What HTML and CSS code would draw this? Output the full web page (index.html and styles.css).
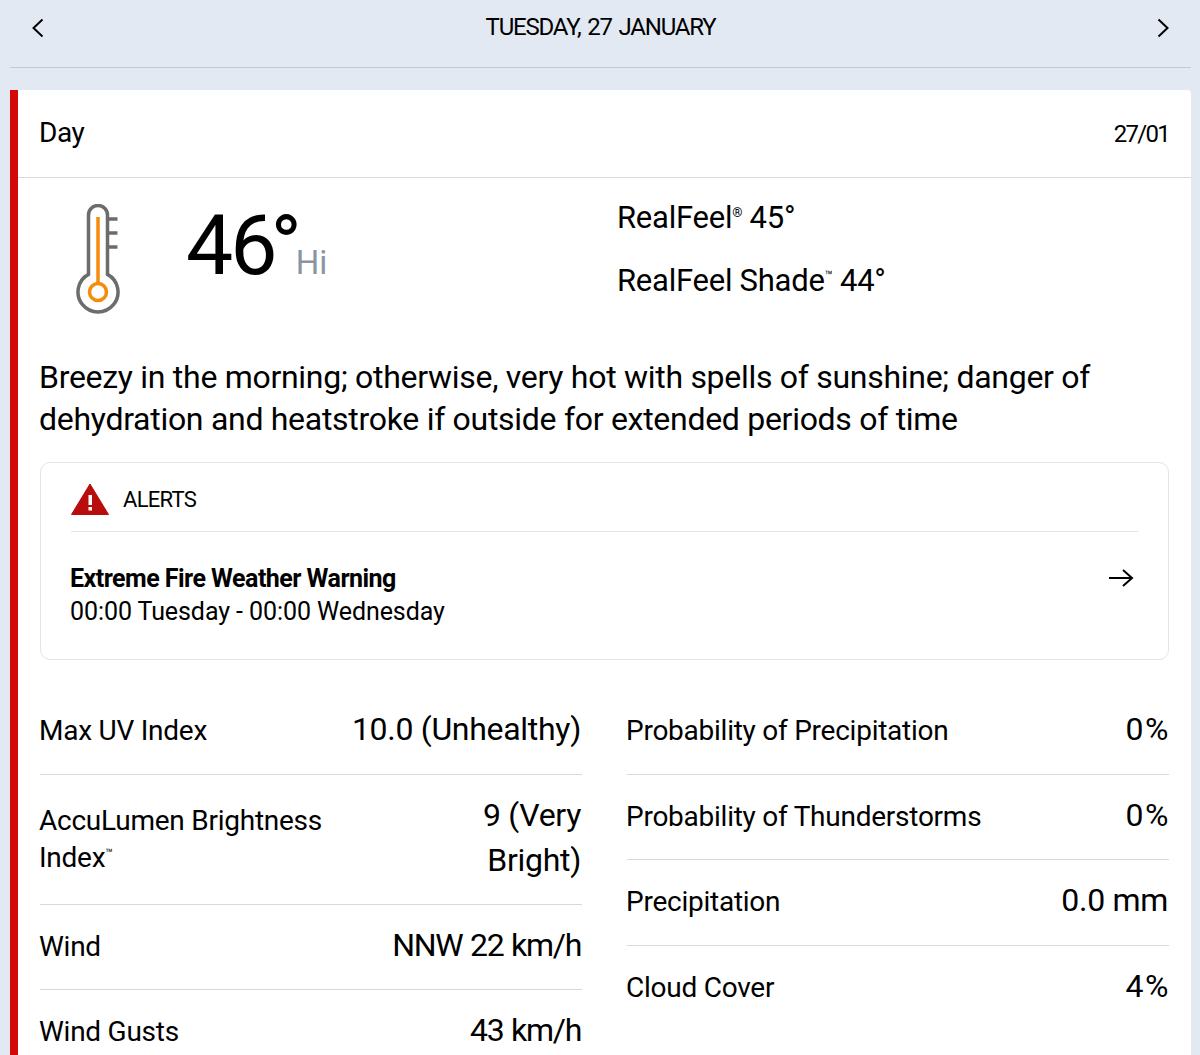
FILE: index.html
```html
<!DOCTYPE html>
<html lang="en">
<head>
    <meta charset="UTF-8">
    <title>Daily Forecast</title>
    <link rel="stylesheet" href="styles.css">
</head>
<body>
    <div class="date-nav">
        <svg class="chevron" viewBox="0 0 14 20"><path d="M12.500 1.500 3.500 10l9 8.500"/></svg>
        <span class="date-title">TUESDAY, 27 JANUARY</span>
        <svg class="chevron" viewBox="0 0 14 20"><path d="M1.500 1.500 10.500 10l-9 8.500"/></svg>
    </div>

    <div class="card">
        <div class="card-head">
            <span class="day-label">Day</span>
            <span class="day-date">27/01</span>
        </div>

        <div class="temp-row">
            <div class="temp-left">
                <svg class="thermo" viewBox="0 0 44 110">
                    <path class="thermo-glass" d="M12.500 70.400V11a9.500 9.500 0 0 1 19 0v59.400a20 20 0 1 1-19 0Z"/>
                    <path class="thermo-glass" d="M31.500 15h10M31.500 29h10M31.500 43h10"/>
                    <path class="thermo-fill" d="M22 13v66"/>
                    <circle class="thermo-fill" cx="22" cy="88" r="8.500"/>
                </svg>
                <div class="temp-value">46<span class="temp-deg">°</span><span class="temp-hi">Hi</span></div>
            </div>
            <div class="realfeel">
                <div>RealFeel<sup>®</sup> 45°</div>
                <div>RealFeel Shade<sup>™</sup> 44°</div>
            </div>
        </div>

        <p class="phrase">Breezy in the morning; otherwise, very hot with spells of sunshine; danger of dehydration and heatstroke if outside for extended periods of time</p>

        <div class="alerts">
            <div class="alerts-head">
                <svg class="alert-icon" viewBox="0 0 38 32">
                    <path d="M19 1 37.500 31.500H.5Z" fill="#b90c0c" stroke="#b90c0c" stroke-linejoin="round"/>
                    <rect x="17.500" y="12" width="3.500" height="10" fill="#fff"/>
                    <rect x="17.500" y="24" width="3.500" height="3.500" fill="#fff"/>
                </svg>
                <span class="alerts-title">ALERTS</span>
            </div>
            <div class="alert-item">
                <div class="alert-text">
                    <div class="alert-name">Extreme Fire Weather Warning</div>
                    <div class="alert-time">00:00 Tuesday - 00:00 Wednesday</div>
                </div>
                <svg class="alert-arrow" viewBox="0 0 26 20"><path d="M1 10h23M15 2l9 8-9 8"/></svg>
            </div>
        </div>

        <div class="details">
            <div class="details-col">
                <div class="detail"><span class="detail-key">Max UV Index</span><span class="detail-val">10.0 (Unhealthy)</span></div>
                <div class="detail detail-tall"><span class="detail-key">AccuLumen Brightness Index<sup>™</sup></span><span class="detail-val">9 (Very Bright)</span></div>
                <div class="detail"><span class="detail-key">Wind</span><span class="detail-val val-tight">NNW 22 km/h</span></div>
                <div class="detail"><span class="detail-key">Wind Gusts</span><span class="detail-val val-tight">43 km/h</span></div>
            </div>
            <div class="details-col">
                <div class="detail"><span class="detail-key">Probability of Precipitation</span><span class="detail-val val-wide">0%</span></div>
                <div class="detail"><span class="detail-key">Probability of Thunderstorms</span><span class="detail-val val-wide">0%</span></div>
                <div class="detail"><span class="detail-key">Precipitation</span><span class="detail-val">0.0 mm</span></div>
                <div class="detail"><span class="detail-key">Cloud Cover</span><span class="detail-val val-wide">4%</span></div>
            </div>
        </div>
    </div>
</body>
</html>
```

FILE: styles.css
```css
html, body {
    height: 1055px;
    overflow: hidden;
}

body {
    margin: 0;
    padding: 0 9px 0 10px;
    background: #e3e9f2;
    color: #000;
    font-family: Roboto, "Liberation Sans", sans-serif;
}

.date-nav {
    height: 55px;
    padding: 0 20px 12px;
    display: flex;
    align-items: center;
    justify-content: space-between;
    border-bottom: 1px solid #c8c8cc;
}

.chevron {
    width: 14px;
    height: 20px;
    fill: none;
    stroke: #000;
    stroke-width: 2;
}

.date-title {
    margin-bottom: 2px;
    font-size: 24px;
    letter-spacing: -1.2px;
    word-spacing: 2px;
}

.card {
    margin-top: 22px;
    padding: 0 22px;
    background: #fff;
    border-left: 8px solid #d20a0a;
    border-radius: 0 4px 0 0;
}

.card-head {
    height: 87px;
    margin: 0 -22px;
    padding: 0 22px;
    display: flex;
    align-items: center;
    justify-content: space-between;
    border-bottom: 1px solid #d9d9d9;
}

.day-label {
    margin: 0 0 2px -1px;
    font-size: 28px;
    letter-spacing: -0.5px;
}

.day-date {
    font-size: 24px;
    letter-spacing: -1.7px;
}

.temp-row {
    display: flex;
    padding-top: 20px;
    height: 178px;
    box-sizing: border-box;
}

.temp-left {
    width: 577px;
    display: flex;
    padding-left: 36px;
    box-sizing: border-box;
}

.thermo {
    width: 44px;
    height: 110px;
    margin-top: 6px;
    fill: none;
}

.thermo-glass {
    stroke: #6c6c6c;
    stroke-width: 3.500;
}

.thermo-fill {
    stroke: #f68b0e;
    stroke-width: 3.500;
}

.temp-value {
    margin: 2px 0 0 66px;
    font-size: 84px;
    line-height: 92px;
    letter-spacing: -3px;
    white-space: nowrap;
}

.temp-deg {
    margin-left: -4px;
}

.temp-hi {
    font-size: 33px;
    color: #8a94a3;
    margin-left: -3px;
    letter-spacing: 0;
}

.realfeel {
    margin-top: 2px;
    font-size: 31px;
    line-height: 36px;
    letter-spacing: -0.25px;
    display: flex;
    flex-direction: column;
    gap: 27px;
}

sup {
    font-size: 0.42em;
    line-height: 0;
}

.phrase {
    margin: 0 0 0 -1px;
    font-size: 32px;
    line-height: 42px;
    letter-spacing: -0.29px;
}

.alerts {
    margin-top: 22px;
    padding: 0 30px;
    height: 198px;
    box-sizing: border-box;
    border: 1px solid #e4e4e4;
    border-radius: 10px;
}

.alerts-head {
    height: 64px;
    padding-top: 4px;
    display: flex;
    align-items: center;
    gap: 14px;
    border-bottom: 1px solid #e4e4e4;
}

.alerts-title {
    font-size: 22px;
    letter-spacing: -0.7px;
}

.alert-icon {
    width: 38px;
    height: 32px;
}

.alert-item {
    padding-top: 30px;
    padding-right: 4px;
    display: flex;
    align-items: flex-start;
    justify-content: space-between;
}

.alert-text {
    margin-left: -1px;
}

.alert-name {
    font-size: 25px;
    font-weight: 700;
    line-height: 33px;
    letter-spacing: -0.53px;
}

.alert-time {
    font-size: 25px;
    line-height: 33px;
    letter-spacing: -0.08px;
}

.alert-arrow {
    width: 26px;
    height: 20px;
    margin-top: 6px;
    fill: none;
    stroke: #000;
    stroke-width: 2;
}

.details {
    display: flex;
    gap: 45px;
    margin-top: 29px;
}

.details-col {
    flex: 1;
    min-width: 0;
}

.detail {
    display: flex;
    justify-content: space-between;
    align-items: center;
    gap: 20px;
    min-height: 84.500px;
    border-bottom: 1px solid #d9d9d9;
}

.detail:last-child {
    border-bottom: 0;
}

.detail-key {
    margin-left: -1px;
    font-size: 28px;
    line-height: 38px;
    letter-spacing: -0.25px;
}

.detail-val {
    margin: -3px 1px 0 0;
    font-size: 32px;
    line-height: 45px;
    letter-spacing: -0.3px;
    text-align: right;
}

.val-tight {
    letter-spacing: -1.3px;
    word-spacing: 1px;
}

.val-wide {
    margin-right: -1px;
    letter-spacing: 1.5px;
}

.detail-tall {
    padding: 21px 0;
}

.detail-tall .detail-key {
    flex: 0 0 330px;
    line-height: 37px;
}

.detail-tall .detail-val {
    width: 190px;
}
```
